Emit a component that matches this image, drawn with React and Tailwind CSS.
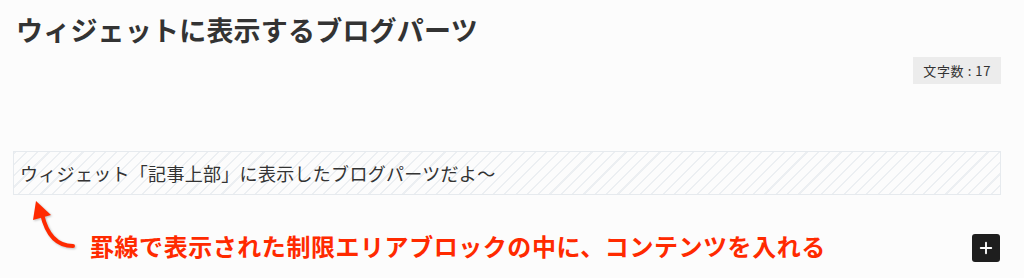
import { Plus } from "lucide-react";

export default function App() {
  return (
    <div
      className="relative w-[1024px] h-[278px] overflow-hidden bg-[#fcfcfc] px-[13px] pr-[23px] pt-[14px] flex flex-col text-[#333]"
      style={{ fontFamily: '"Noto Sans CJK JP", "Noto Sans", sans-serif' }}
    >
      {/* title */}
      <h1 className="pl-[3px] text-[27px] leading-[32px] font-bold tracking-[0.2px]">
        ウィジェットに表示するブログパーツ
      </h1>

      {/* char count */}
      <div className="mt-[11px] flex justify-end">
        <span className="h-[27px] px-[10px] flex items-center bg-[#ececec] text-[13px] tracking-[0.6px] text-[#333]">
          文字数 : 17
        </span>
      </div>

      {/* restricted area block */}
      <div className="mt-[67px] h-[44px] flex items-center px-[6px] border border-[#e6eaee] bg-[repeating-linear-gradient(135deg,#eceff2_0px,#eceff2_1.5px,transparent_1.5px,transparent_8px)]">
        <span className="text-[18px] tracking-[0.3px] text-[#333]">
          ウィジェット「記事上部」に表示したブログパーツだよ〜
        </span>
      </div>

      {/* note row */}
      <div className="mt-[35px] flex items-center justify-between">
        <p className="pl-[77px] text-[24px] leading-[30px] font-bold tracking-[0.55px] text-[#ff2a00]">
          罫線で表示された制限エリアブロックの中に、コンテンツを入れる
        </p>
        <button className="w-[28px] h-[28px] mt-[4px] mr-[1px] rounded-[3px] bg-[#1e1e1e] flex items-center justify-center">
          <Plus size={18} strokeWidth={2.5} color="#fff" />
        </button>
      </div>

      {/* annotation arrow */}
      <svg
        className="absolute left-0 top-0 pointer-events-none"
        width="100"
        height="278"
        viewBox="0 0 100 278"
        style={{ filter: "drop-shadow(1px 1px 1px rgba(0,0,0,0.25))" }}
      >
        <path
          d="M73 246 C 58 246, 47 236, 42 214"
          fill="none"
          stroke="#ff2a00"
          strokeWidth="4"
          strokeLinecap="round"
        />
        <polygon points="36,201 33,220 51,215" fill="#ff2a00" />
      </svg>
    </div>
  );
}
